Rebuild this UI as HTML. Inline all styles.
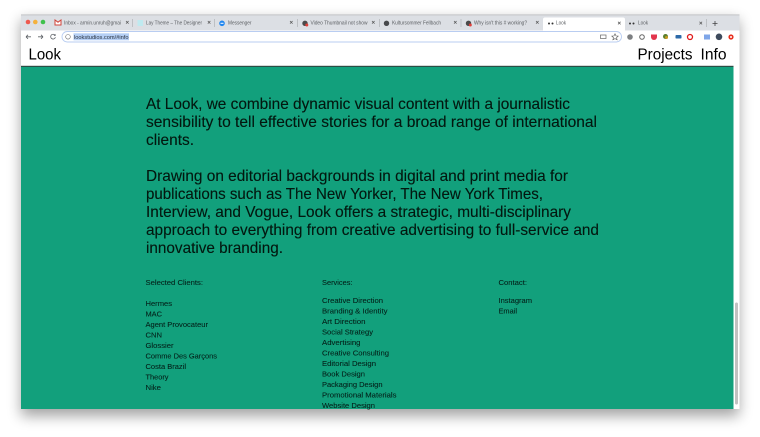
<!DOCTYPE html>
<html><head><meta charset="utf-8"><style>
html,body{margin:0;padding:0;width:760px;height:437px;overflow:hidden;background:#fff}
svg{display:block;font-family:"Liberation Sans",sans-serif}
.t{font-size:5.2px;fill:#5b5e62}
.b{font-size:15.8px;fill:#03170f;stroke:#03170f;stroke-width:.12}
.s{font-size:7.2px;fill:#04211a;stroke:#04211a;stroke-width:.08}
.x{stroke:#555;stroke-width:.7;fill:none}
.sep{stroke:#a8abb0;stroke-width:.6}
</style></head><body>
<svg width="760" height="437" viewBox="0 0 760 437" xmlns="http://www.w3.org/2000/svg">
<defs>
<filter id="sh" x="-10%" y="-10%" width="120%" height="125%"><feGaussianBlur stdDeviation="7"/></filter>
</defs>
<rect x="21" y="20" width="718" height="396" fill="#000" opacity=".36" filter="url(#sh)"/>
<rect x="21" y="14.5" width="718.5" height="394.5" fill="#fff"/>
<!-- tab strip -->
<rect x="21" y="14.5" width="718.5" height="16" fill="#dcdfe4"/>
<rect x="21" y="14.5" width="718.5" height=".8" fill="#b9bbbe"/>
<circle cx="28" cy="22" r="2.3" fill="#ee5a50"/><circle cx="35.3" cy="22" r="2.3" fill="#f4b13d"/><circle cx="43" cy="22" r="2.3" fill="#3fc14d"/>
<!-- tabs -->
<path d="M55 25V20l3 2.2L61 20v5z" fill="#fff" stroke="#d0433a" stroke-width="1"/>
<text class="t" x="64" y="24.3" textLength="57" lengthAdjust="spacingAndGlyphs">Inbox - armin.unruh@gmai</text>
<path class="x" d="M126 21l2.6 2.6M128.600 21L126 23.600"/><line class="sep" x1="132.500" y1="19" x2="132.500" y2="27"/>
<rect x="137.500" y="20" width="5.500" height="6" fill="#bfeaf0"/>
<text class="t" x="146" y="24.300" textLength="56" lengthAdjust="spacingAndGlyphs">Lay Theme – The Designer</text>
<path class="x" d="M207.800 21l2.600 2.600M210.400 21l-2.600 2.600"/><line class="sep" x1="214.500" y1="19" x2="214.500" y2="27"/>
<circle cx="222" cy="23.300" r="2.800" fill="#1f86f0"/><rect x="220.500" y="22.800" width="3" height="1" fill="#fff"/>
<text class="t" x="228" y="24.300" textLength="23.500" lengthAdjust="spacingAndGlyphs">Messenger</text>
<path class="x" d="M290 21l2.600 2.600M292.600 21L290 23.600"/><line class="sep" x1="297.500" y1="19" x2="297.500" y2="27"/>
<circle cx="305" cy="23.300" r="2.700" fill="#4a4a4a"/><circle cx="306.800" cy="25" r="1.500" fill="#e0403a"/>
<text class="t" x="310.500" y="24.300" textLength="57" lengthAdjust="spacingAndGlyphs">Video Thumbnail not show</text>
<path class="x" d="M372 21l2.600 2.600M374.600 21L372 23.600"/><line class="sep" x1="379.500" y1="19" x2="379.500" y2="27"/>
<circle cx="386.500" cy="23.300" r="2.700" fill="#47494c"/>
<text class="t" x="392" y="24.300" textLength="49" lengthAdjust="spacingAndGlyphs">Kultursommer Fellbach</text>
<path class="x" d="M454 21l2.600 2.600M456.600 21L454 23.600"/><line class="sep" x1="461" y1="19" x2="461" y2="27"/>
<circle cx="468.500" cy="23.300" r="2.700" fill="#4a4a4a"/><circle cx="470.300" cy="25" r="1.500" fill="#e0403a"/>
<text class="t" x="474" y="24.300" textLength="53" lengthAdjust="spacingAndGlyphs">Why isn't this # working?</text>
<path class="x" d="M536 21l2.600 2.600M538.600 21L536 23.600"/>
<path d="M543 30.500V19.500q0-2 2-2h78q2 0 2 2v11z" fill="#fff"/>
<circle cx="549" cy="23.500" r="1" fill="#333"/><circle cx="552.500" cy="23.500" r="1" fill="#333"/>
<text class="t" x="556" y="24.300" textLength="10" lengthAdjust="spacingAndGlyphs">Look</text>
<path class="x" d="M618 21.800l2.600 2.600M620.600 21.800l-2.600 2.600"/>
<circle cx="630" cy="23.500" r="1" fill="#333"/><circle cx="633.500" cy="23.500" r="1" fill="#333"/>
<text class="t" x="638" y="24.300" textLength="10" lengthAdjust="spacingAndGlyphs">Look</text>
<path class="x" d="M699.500 21.800l2.600 2.600M702.100 21.800l-2.600 2.600"/><line class="sep" x1="706.500" y1="19" x2="706.500" y2="27"/>
<path d="M712.500 23.500h5M715 21v5" stroke="#444" stroke-width=".8"/>
<!-- toolbar -->
<rect x="21" y="30.500" width="718.500" height="13.500" fill="#fff"/>
<path d="M26 36.800h5M26 36.800l2-2M26 36.800l2 2" stroke="#5f6368" stroke-width=".8" fill="none"/>
<path d="M43 36.800h-5M43 36.800l-2-2M43 36.800l-2 2" stroke="#5f6368" stroke-width=".8" fill="none"/>
<path d="M55 35.200a2.400 2.400 0 1 0 .4 2" stroke="#5f6368" stroke-width=".8" fill="none"/><path d="M55.600 33.900v2h-2z" fill="#5f6368"/>
<rect x="62" y="31.500" width="559.500" height="10.500" rx="5.200" fill="#fff" stroke="#b9cdf1" stroke-width=".9"/>
<circle cx="68" cy="36.800" r="2.300" fill="none" stroke="#666" stroke-width=".6"/>
<rect x="73.500" y="33.300" width="55.500" height="7" fill="#b5cff5"/>
<text x="74" y="38.800" font-size="5.900" fill="#2a3340" textLength="54.500" lengthAdjust="spacingAndGlyphs">lookstudios.com/#info</text>
<rect x="600.500" y="35" width="5.500" height="3.500" fill="none" stroke="#666" stroke-width=".7"/>
<path d="M615 33.800l1 2.100 2.200.2-1.700 1.500.6 2.200-2.100-1.200-2.100 1.200.6-2.200-1.700-1.500 2.200-.2z" fill="none" stroke="#555" stroke-width=".6"/>
<circle cx="630" cy="37" r="2.800" fill="#7d7f82"/>
<circle cx="642" cy="37" r="2.300" fill="none" stroke="#666" stroke-width="1"/>
<path d="M651 34.500h6v2.500a3 3 0 0 1-6 0z" fill="#e2354c"/>
<circle cx="665.500" cy="36.500" r="2.500" fill="#5b7f2c"/><circle cx="666.500" cy="37.500" r="1.500" fill="#c89a23"/>
<rect x="675.500" y="35" width="6" height="3.500" rx=".8" fill="#2d6aa8"/>
<circle cx="690" cy="37" r="2.500" fill="none" stroke="#e01b1b" stroke-width="1.300"/>
<rect x="704" y="34.500" width="6" height="5" fill="#7fa6e8"/>
<circle cx="719" cy="36.800" r="3.300" fill="#3d4a5c"/>
<circle cx="731" cy="37" r="2.600" fill="#e8301f"/><circle cx="731" cy="37" r="1" fill="#fff"/>
<!-- page -->
<rect x="21" y="44" width="718.500" height="365" fill="#fff"/>
<rect x="21" y="66" width="712.500" height="343" fill="#12a07c"/>
<rect x="21" y="65.800" width="712.500" height="1" fill="#2f3a38"/>
<text x="28.500" y="59.500" font-size="15.600" fill="#000" textLength="32.500" lengthAdjust="spacingAndGlyphs">Look</text>
<text x="637.500" y="59.500" font-size="15.600" fill="#000" textLength="55" lengthAdjust="spacingAndGlyphs">Projects</text>
<text x="700.500" y="59.500" font-size="15.600" fill="#000" textLength="26" lengthAdjust="spacingAndGlyphs">Info</text>
<!-- scrollbar -->
<rect x="735" y="302.500" width="3" height="102" rx="1.500" fill="#c1c1c1"/>
<!-- body -->
<text class="b" x="146" y="109" textLength="424" lengthAdjust="spacingAndGlyphs">At Look, we combine dynamic visual content with a journalistic</text>
<text class="b" x="146" y="127" textLength="451" lengthAdjust="spacingAndGlyphs">sensibility to tell effective stories for a broad range of international</text>
<text class="b" x="146" y="145" textLength="48" lengthAdjust="spacingAndGlyphs">clients.</text>
<text class="b" x="146" y="181" textLength="422" lengthAdjust="spacingAndGlyphs">Drawing on editorial backgrounds in digital and print media for</text>
<text class="b" x="146" y="199" textLength="397" lengthAdjust="spacingAndGlyphs">publications such as The New Yorker, The New York Times,</text>
<text class="b" x="146" y="217" textLength="425" lengthAdjust="spacingAndGlyphs">Interview, and Vogue, Look offers a strategic, multi-disciplinary</text>
<text class="b" x="146" y="235" textLength="453" lengthAdjust="spacingAndGlyphs">approach to everything from creative advertising to full-service and</text>
<text class="b" x="146" y="253" textLength="137" lengthAdjust="spacingAndGlyphs">innovative branding.</text>
<!-- lists -->
<text class="s" x="145.500" y="285" textLength="57.500" lengthAdjust="spacingAndGlyphs">Selected Clients:</text>
<text class="s" x="145.500" y="306" textLength="26.500" lengthAdjust="spacingAndGlyphs">Hermes</text>
<text class="s" x="145.500" y="316.500" textLength="16.500" lengthAdjust="spacingAndGlyphs">MAC</text>
<text class="s" x="145.500" y="327" textLength="62.500" lengthAdjust="spacingAndGlyphs">Agent Provocateur</text>
<text class="s" x="145.500" y="337.500" textLength="16.500" lengthAdjust="spacingAndGlyphs">CNN</text>
<text class="s" x="145.500" y="348" textLength="28" lengthAdjust="spacingAndGlyphs">Glossier</text>
<text class="s" x="145.500" y="358.500" textLength="71.500" lengthAdjust="spacingAndGlyphs">Comme Des Garçons</text>
<text class="s" x="145.500" y="369" textLength="40.500" lengthAdjust="spacingAndGlyphs">Costa Brazil</text>
<text class="s" x="145.500" y="379.500" textLength="23" lengthAdjust="spacingAndGlyphs">Theory</text>
<text class="s" x="145.500" y="390" textLength="15.500" lengthAdjust="spacingAndGlyphs">Nike</text>
<text class="s" x="322" y="285" textLength="30.500" lengthAdjust="spacingAndGlyphs">Services:</text>
<text class="s" x="322" y="303" textLength="61" lengthAdjust="spacingAndGlyphs">Creative Direction</text>
<text class="s" x="322" y="313.500" textLength="65.500" lengthAdjust="spacingAndGlyphs">Branding &amp; Identity</text>
<text class="s" x="322" y="324" textLength="43.500" lengthAdjust="spacingAndGlyphs">Art Direction</text>
<text class="s" x="322" y="334.500" textLength="51" lengthAdjust="spacingAndGlyphs">Social Strategy</text>
<text class="s" x="322" y="345" textLength="38.500" lengthAdjust="spacingAndGlyphs">Advertising</text>
<text class="s" x="322" y="355.500" textLength="67" lengthAdjust="spacingAndGlyphs">Creative Consulting</text>
<text class="s" x="322" y="366" textLength="54" lengthAdjust="spacingAndGlyphs">Editorial Design</text>
<text class="s" x="322" y="376.500" textLength="43" lengthAdjust="spacingAndGlyphs">Book Design</text>
<text class="s" x="322" y="387" textLength="60.500" lengthAdjust="spacingAndGlyphs">Packaging Design</text>
<text class="s" x="322" y="397.500" textLength="74.500" lengthAdjust="spacingAndGlyphs">Promotional Materials</text>
<text class="s" x="322" y="408" textLength="53" lengthAdjust="spacingAndGlyphs">Website Design</text>
<text class="s" x="498.500" y="285" textLength="28.500" lengthAdjust="spacingAndGlyphs">Contact:</text>
<text class="s" x="498.500" y="303" textLength="33.500" lengthAdjust="spacingAndGlyphs">Instagram</text>
<text class="s" x="498.500" y="313.500" textLength="18.500" lengthAdjust="spacingAndGlyphs">Email</text>
</svg>
</body></html>
